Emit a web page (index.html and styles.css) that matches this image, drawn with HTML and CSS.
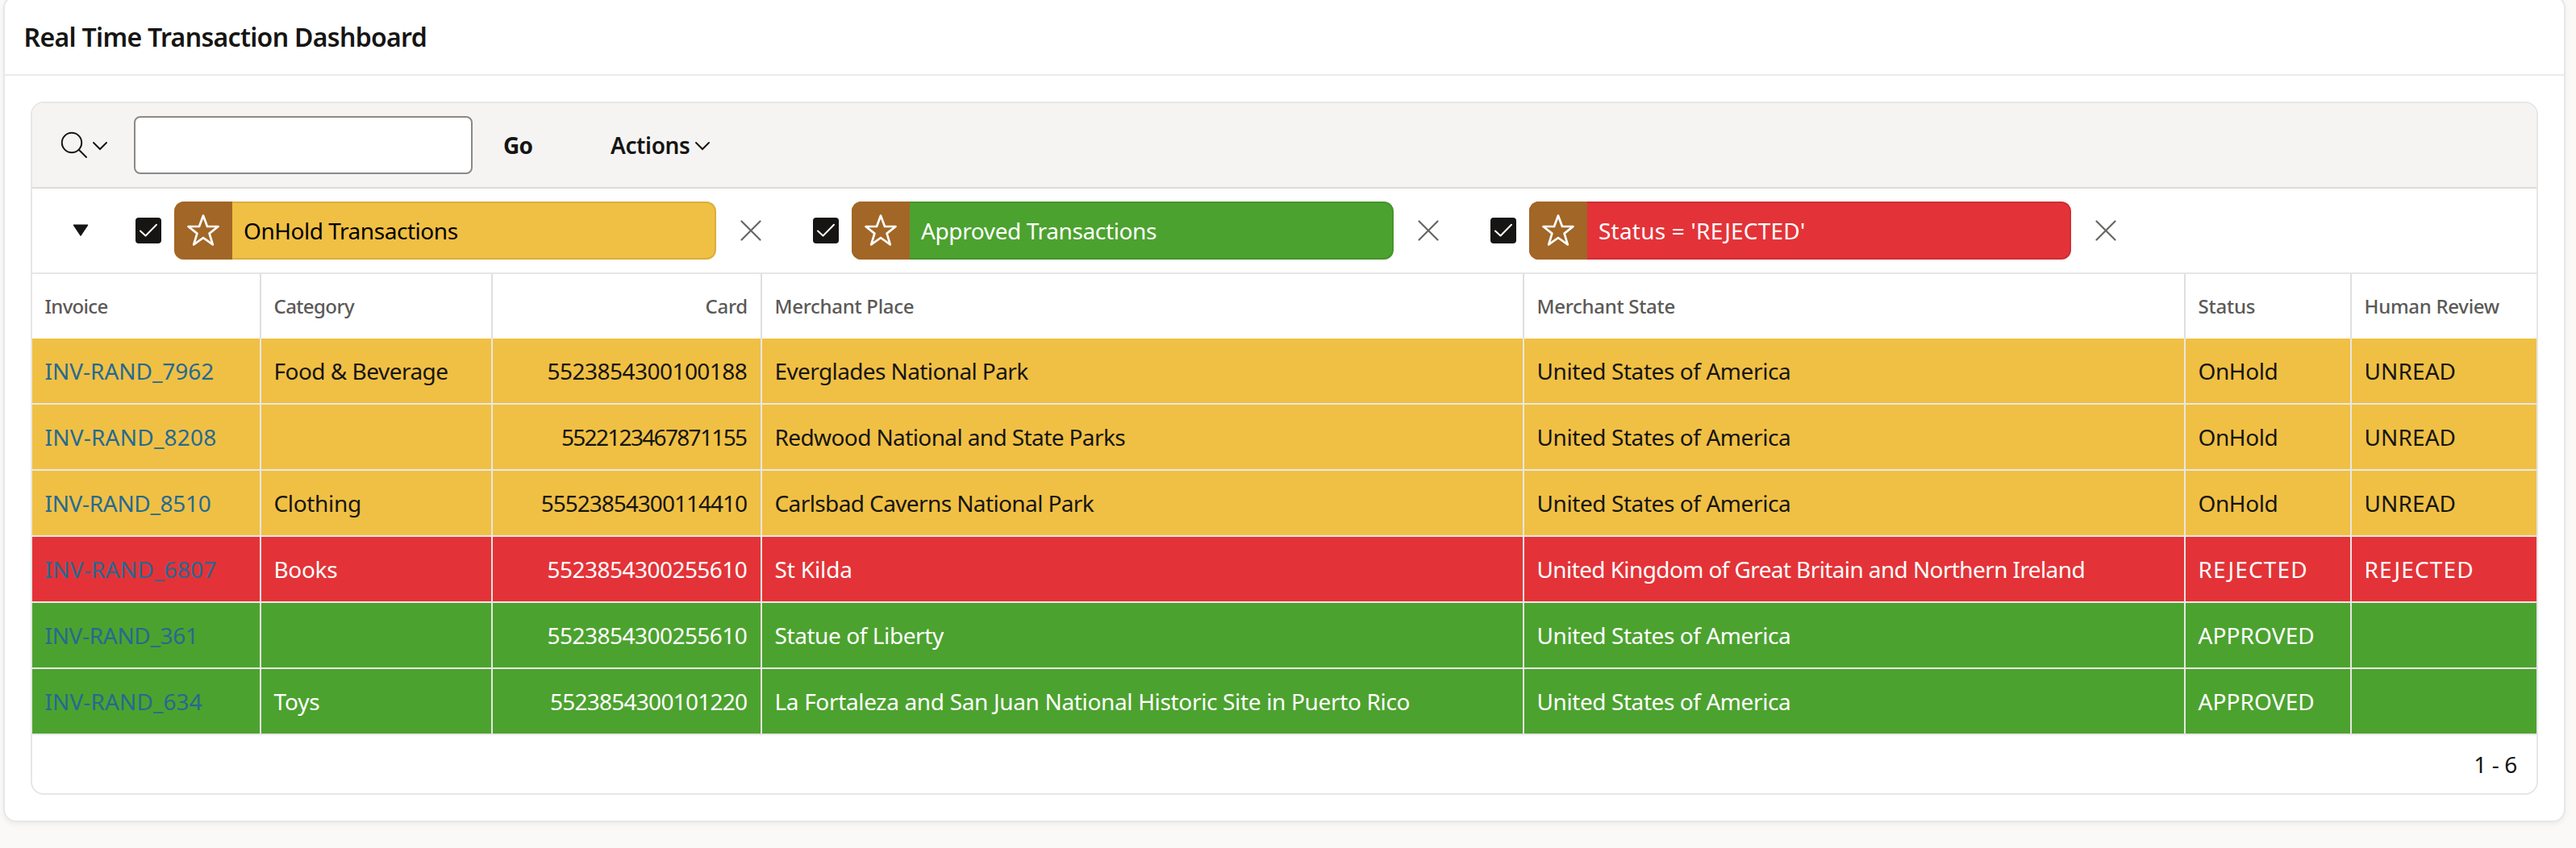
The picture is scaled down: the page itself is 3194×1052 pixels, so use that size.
FILE: index.html
```html
<!DOCTYPE html>
<html lang="en">
<head>
<meta charset="utf-8">
<title>Real Time Transaction Dashboard</title>
<link rel="stylesheet" href="styles.css">
</head>
<body>
<section class="card">
  <header class="card-header"><h1 class="card-title">Real Time Transaction Dashboard</h1></header>
  <div class="report">
    <div class="toolbar">
      <button class="search-menu" aria-label="Search columns">
        <svg width="60" height="36" viewBox="0 0 60 36" fill="none" stroke="currentColor" stroke-width="2" stroke-linecap="round">
          <circle cx="15" cy="15" r="12.2"/><path d="M24 24l9 9M42 15l8 8 8-8"/>
        </svg>
      </button>
      <input class="search-field" type="text" aria-label="Search">
      <button class="go">Go</button>
      <button class="actions"><span>Actions</span>
        <svg width="20" height="12" viewBox="0 0 20 12" fill="none" stroke="currentColor" stroke-width="2" stroke-linecap="round"><path d="M2 2l8 8 8-8"/></svg>
      </button>
    </div>
    <div class="filters">
      <svg class="toggle" width="20" height="16" viewBox="0 0 20 16"><path d="M1 1h18L10 14.500z" fill="#161513" stroke="#161513" stroke-linejoin="round"/></svg>
      <div class="filter">
        <svg class="check" viewBox="0 0 32 32"><path d="M6 16.500l6.500 6L26 8.800"/></svg>
        <div class="pill onhold"><span class="pill-icon"><svg viewBox="0 0 40 40"><path d="M20 1.500l5 13.500h13.500L27.600 23.600l4.200 13.800L20 29 8.200 37.400l4.200-13.800L1.500 15H15z"/></svg></span><span class="pill-text t-onhold">OnHold Transactions</span></div>
        <svg class="remove" viewBox="0 0 26 26"><path d="M1.500 1.500l23 23M24.500 1.500l-23 23"/></svg>
      </div>
      <div class="filter">
        <svg class="check" viewBox="0 0 32 32"><path d="M6 16.500l6.500 6L26 8.800"/></svg>
        <div class="pill approved"><span class="pill-icon"><svg viewBox="0 0 40 40"><path d="M20 1.500l5 13.500h13.500L27.600 23.600l4.200 13.800L20 29 8.200 37.400l4.200-13.800L1.500 15H15z"/></svg></span><span class="pill-text t-approved">Approved Transactions</span></div>
        <svg class="remove" viewBox="0 0 26 26"><path d="M1.500 1.500l23 23M24.500 1.500l-23 23"/></svg>
      </div>
      <div class="filter">
        <svg class="check" viewBox="0 0 32 32"><path d="M6 16.500l6.500 6L26 8.800"/></svg>
        <div class="pill rejected"><span class="pill-icon"><svg viewBox="0 0 40 40"><path d="M20 1.500l5 13.500h13.500L27.600 23.600l4.200 13.800L20 29 8.200 37.400l4.200-13.800L1.500 15H15z"/></svg></span><span class="pill-text t-rejected">Status = 'REJECTED'</span></div>
        <svg class="remove" viewBox="0 0 26 26"><path d="M1.500 1.500l23 23M24.500 1.500l-23 23"/></svg>
      </div>
    </div>
    <table class="grid">
      <colgroup><col class="c-invoice"><col class="c-category"><col class="c-card"><col class="c-place"><col class="c-state"><col class="c-status"><col class="c-review"></colgroup>
      <thead>
        <tr><th class="h-tight">Invoice</th><th class="h-snug">Category</th><th class="num"><span class="h-card">Card</span></th><th>Merchant Place</th><th>Merchant State</th><th class="h-status">Status</th><th>Human Review</th></tr>
      </thead>
      <tbody>
        <tr class="onhold"><td><a class="i0">INV-RAND_7962</a></td><td class="t5">Food &amp; Beverage</td><td class="num"><span class="n5">5523854300100188</span></td><td class="t6">Everglades National Park</td><td class="t4">United States of America</td><td class="t4">OnHold</td><td class="w1">UNREAD</td></tr>
        <tr class="onhold"><td><a class="i3">INV-RAND_8208</a></td><td></td><td class="num"><span class="n17">5522123467871155</span></td><td class="t6">Redwood National and State Parks</td><td class="t4">United States of America</td><td class="t4">OnHold</td><td class="w1">UNREAD</td></tr>
        <tr class="onhold"><td><a class="im3">INV-RAND_8510</a></td><td class="t3">Clothing</td><td class="num"><span class="n10">55523854300114410</span></td><td class="t6">Carlsbad Caverns National Park</td><td class="t4">United States of America</td><td class="t4">OnHold</td><td class="w1">UNREAD</td></tr>
        <tr class="rejected"><td><a class="i3">INV-RAND_6807</a></td><td class="t3">Books</td><td class="num"><span class="n5">5523854300255610</span></td><td class="t1">St Kilda</td><td class="t6">United Kingdom of Great Britain and Northern Ireland</td><td class="w12">REJECTED</td><td class="w12">REJECTED</td></tr>
        <tr class="approved"><td><a class="i361">INV-RAND_361</a></td><td></td><td class="num"><span class="n5">5523854300255610</span></td><td class="t4">Statue of Liberty</td><td class="t4">United States of America</td><td class="w1">APPROVED</td><td></td></tr>
        <tr class="approved"><td><a class="i1">INV-RAND_634</a></td><td class="t1">Toys</td><td class="num"><span class="n7">5523854300101220</span></td><td class="t3">La Fortaleza and San Juan National Historic Site in Puerto Rico</td><td class="t4">United States of America</td><td class="w1">APPROVED</td><td></td></tr>
      </tbody>
    </table>
    <footer class="pager">1 - 6</footer>
  </div>
</section>
</body>
</html>
```
FILE: styles.css
```css
*{box-sizing:border-box}
html{overflow:hidden;background:#faf9f8}
body{margin:0;height:1052px;overflow:hidden;background:#faf9f8;color:#161513;font:400 28px/40px "Noto Sans","Open Sans",sans-serif}
button{border:0;padding:0;background:none;color:inherit;font:inherit}

.card{margin:-6px 13px 0 4px;height:1026px;border:2px solid #e7e7e7;border-radius:16px;background:#fff;box-shadow:0 3px 6px rgba(22,21,19,.05)}
.card-header{display:flex;align-items:center;height:98px;padding:3px 23px 0 23.5px;border-bottom:2px solid #ebebeb}
.card-title{margin:0;font-size:32px;font-weight:600;line-height:44px;letter-spacing:-.68px}

.report{display:flex;flex-direction:column;height:860px;margin:32px 32px 0;border:2px solid #e6e6e6;border-radius:16px;overflow:hidden}

.toolbar{display:flex;align-items:center;height:106px;padding-left:34px;background:#f5f4f2;border-bottom:2px solid #dddcda}
.search-menu{display:flex;width:92px}
.search-field{width:420px;height:72px;border:2px solid #8a8987;border-radius:8px;background:#fff;font:inherit}
.go{margin-left:38px;width:36px;font-weight:700;letter-spacing:-1px}
.actions{display:flex;align-items:center;gap:6px;margin-left:97px;font-weight:600;letter-spacing:-.38px}
.actions svg{margin-top:2px}

.filters{display:flex;align-items:center;height:106px;border-bottom:2px solid #e6e6e6}
.toggle{margin:0 58px 0 50px}
.filter{display:flex;align-items:center;width:840px}
.check{width:32px;height:32px;border-radius:4px;background:#161513;fill:none;stroke:#fff;stroke-width:2;stroke-linecap:round;stroke-linejoin:round}
.pill{display:flex;align-items:center;width:672px;height:72px;margin:0 30px 0 16px;border-radius:12px;overflow:hidden;box-shadow:inset 0 0 0 2px rgba(22,21,19,.1)}
.pill-icon{display:flex;align-items:center;justify-content:center;width:72px;height:72px;background:#a26626}
.pill-icon svg{width:40px;height:40px;fill:none;stroke:#fff;stroke-width:2.7;stroke-linejoin:round}
.pill-text{padding-left:14px}
.t-onhold{letter-spacing:-.46px}
.t-approved{letter-spacing:-.38px}
.t-rejected{letter-spacing:.22px}
.remove{width:26px;height:26px;fill:none;stroke:#686663;stroke-width:2.2;stroke-linecap:round}
.pill.onhold{color:#000}

.onhold{background:#f0c044}
.approved{background:#4ca22f;color:#fff}
.rejected{background:#e33338;color:#fff}

.grid{width:3105px;table-layout:fixed;border-collapse:separate;border-spacing:0}
.c-invoice{width:284px}
.c-category{width:287px}
.c-card{width:334px}
.c-place{width:945px}
.c-state{width:820px}
.c-status{width:206px}
.c-review{width:229px}
th,td{padding:0 0 0 15.5px;text-align:left;white-space:nowrap;vertical-align:middle}
th{height:80px;border-right:2px solid #dfdfdf;color:#5b5957;font-size:24px;font-weight:500;letter-spacing:-.3px}
td{height:82px;border-right:2px solid #e9e7e3;border-bottom:2px solid #e9e8e7}
th:last-child,td:last-child{border-right:0}
.num{padding-right:16px;text-align:right}
a{color:#256a92}

/* tracking steps for the grid text */
.h-tight{letter-spacing:-.7px}
.h-snug{letter-spacing:-.6px}
.h-status{letter-spacing:-.2px}
.h-card{letter-spacing:-.25px}
.t6{letter-spacing:-.61px}
.t5{letter-spacing:-.52px}
.t4{letter-spacing:-.42px}
.t3{letter-spacing:-.34px}
.t1{letter-spacing:-.15px}
.w1{letter-spacing:.1px}
.w12{letter-spacing:1.15px}
.i0{letter-spacing:-.02px}
.i3{letter-spacing:.22px}
.i1{letter-spacing:.1px}
.im3{letter-spacing:-.33px}
.i361{letter-spacing:-.33px}
.n5{letter-spacing:-.53px;margin-right:.7px}
.n7{letter-spacing:-.74px;margin-right:.7px}
.n10{letter-spacing:-1px;margin-right:1px}
.n17{letter-spacing:-1.68px;margin-right:1.7px}

.pager{display:flex;align-items:center;justify-content:flex-end;height:72px;padding-right:24px;letter-spacing:-.35px}
```
